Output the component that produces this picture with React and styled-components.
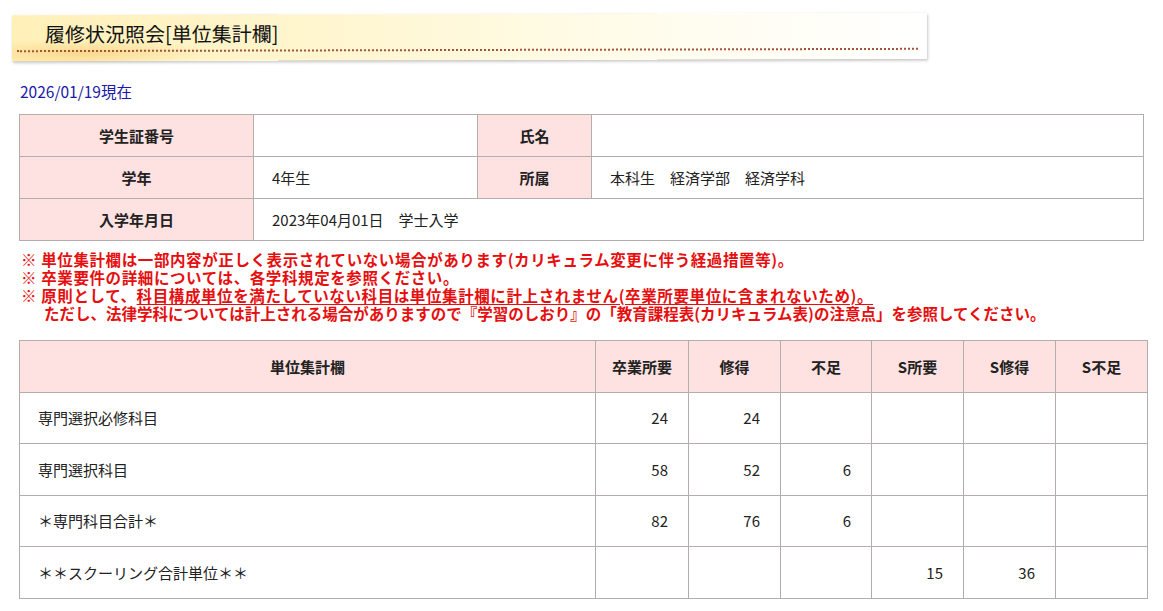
import React from "react";
import styled, { createGlobalStyle } from "styled-components";

const GlobalStyle = createGlobalStyle`
  body {
    margin: 0;
    background: #fff;
    font-family: "Noto Sans CJK JP", "Noto Sans", sans-serif;
    color: #222;
  }
`;

const Page = styled.div`
  width: 1163px;
  padding: 14px 0 0 0;
`;

const Banner = styled.div`
  margin-left: 12px;
  width: 915px;
  height: 46px;
  box-sizing: border-box;
  padding-top: 6px;
  background:
    radial-gradient(ellipse 130px 14px at 70px 38px, rgba(250, 200, 110, 0.6), rgba(250, 200, 110, 0) 100%),
    linear-gradient(90deg, #fff0b8 0%, #fff7d4 40%, #fffdf0 75%, #ffffff 100%);
  box-shadow: 1px 2px 3px rgba(0, 0, 0, 0.2), 0 0 2px rgba(0, 0, 0, 0.08);
  transform: rotate(-0.15deg);
`;

const Title = styled.h1`
  margin: 0 0 0 33px;
  font-size: 20px;
  font-weight: normal;
  line-height: 26px;
  color: #111;
`;

const Dots = styled.div`
  margin: 3px 9px 0 5px;
  border-bottom: 2px dotted #a0553a;
`;

const DateLine = styled.div`
  margin: 21px 0 0 20px;
  font-size: 15.5px;
  line-height: 20px;
  color: #1a1aa8;
`;

const Table = styled.table`
  margin-left: 19px;
  width: ${({ $w }) => $w}px;
  border-collapse: collapse;
  border: 1px solid #6e625c;
  table-layout: fixed;
`;

const InfoTable = styled(Table)`
  margin-top: 13px;
`;

const SumTable = styled(Table)`
  margin-top: 18px;
`;

const Th = styled.th`
  background: #fee1e1;
  border: 1px solid #b3adab;
  font-size: 15px;
  font-weight: bold;
  text-align: center;
  height: ${({ $h }) => $h}px;
  padding: 0;
  color: #222;
`;

const Td = styled.td`
  border: 1px solid #b3adab;
  font-size: 15px;
  height: ${({ $h }) => $h}px;
  padding: ${({ $num }) => ($num ? "0 20px 0 0" : "0 0 0 18px")};
  text-align: ${({ $num }) => ($num ? "right" : "left")};
  color: #222;
`;

const Notes = styled.div`
  margin: 9px 0 0 21px;
  font-size: 15.5px;
  font-weight: bold;
  line-height: 18px;
  color: #e60f0f;
`;

const NoteLine = styled.div`
  padding-left: ${({ $indent }) => ($indent ? "23px" : "0")};
  letter-spacing: ${({ $spacing }) => $spacing ?? 0}px;
  white-space: nowrap;
`;

const Under = styled.span`
  text-decoration: underline;
  text-underline-offset: 2px;
`;

const rows = [
  { name: "専門選択必修科目", v: ["24", "24", "", "", "", ""] },
  { name: "専門選択科目", v: ["58", "52", "6", "", "", ""] },
  { name: "＊専門科目合計＊", v: ["82", "76", "6", "", "", ""] },
  { name: "＊＊スクーリング合計単位＊＊", v: ["", "", "", "15", "36", ""] },
];

const heads = ["卒業所要", "修得", "不足", "S所要", "S修得", "S不足"];

export default function App() {
  return (
    <Page>
      <GlobalStyle />
      <Banner>
        <Title>履修状況照会[単位集計欄]</Title>
        <Dots />
      </Banner>
      <DateLine>2026/01/19現在</DateLine>

      <InfoTable $w={1125}>
        <colgroup>
          <col style={{ width: 234 }} />
          <col style={{ width: 224 }} />
          <col style={{ width: 114 }} />
          <col />
        </colgroup>
        <tbody>
          <tr>
            <Th $h={41}>学生証番号</Th>
            <Td $h={41}></Td>
            <Th $h={41}>氏名</Th>
            <Td $h={41}></Td>
          </tr>
          <tr>
            <Th $h={41}>学年</Th>
            <Td $h={41}>4年生</Td>
            <Th $h={41}>所属</Th>
            <Td $h={41}>本科生　経済学部　経済学科</Td>
          </tr>
          <tr>
            <Th $h={41}>入学年月日</Th>
            <Td $h={41} colSpan={3}>2023年04月01日　学士入学</Td>
          </tr>
        </tbody>
      </InfoTable>

      <Notes>
        <NoteLine $spacing={0.6}>※ 単位集計欄は一部内容が正しく表示されていない場合があります(カリキュラム変更に伴う経過措置等)。</NoteLine>
        <NoteLine $spacing={0.6}>※ 卒業要件の詳細については、各学科規定を参照ください。</NoteLine>
        <NoteLine $spacing={0.6}>
          ※ 原則として、<Under>科目構成単位を満たしていない科目は単位集計欄に計上されません(卒業所要単位に含まれないため)。</Under>
        </NoteLine>
        <NoteLine $indent>ただし、法律学科については計上される場合がありますので『学習のしおり』の「教育課程表(カリキュラム表)の注意点」を参照してください。</NoteLine>
      </Notes>

      <SumTable $w={1129}>
        <colgroup>
          <col style={{ width: 576 }} />
          <col style={{ width: 93 }} />
          <col style={{ width: 92 }} />
          <col style={{ width: 91 }} />
          <col style={{ width: 92 }} />
          <col style={{ width: 92 }} />
          <col />
        </colgroup>
        <thead>
          <tr>
            <Th $h={50.5}>単位集計欄</Th>
            {heads.map((h) => (
              <Th key={h} $h={50.5}>{h}</Th>
            ))}
          </tr>
        </thead>
        <tbody>
          {rows.map((r) => (
            <tr key={r.name}>
              <Td $h={50.5}>{r.name}</Td>
              {r.v.map((v, i) => (
                <Td key={i} $h={50.5} $num>{v}</Td>
              ))}
            </tr>
          ))}
        </tbody>
      </SumTable>
    </Page>
  );
}
